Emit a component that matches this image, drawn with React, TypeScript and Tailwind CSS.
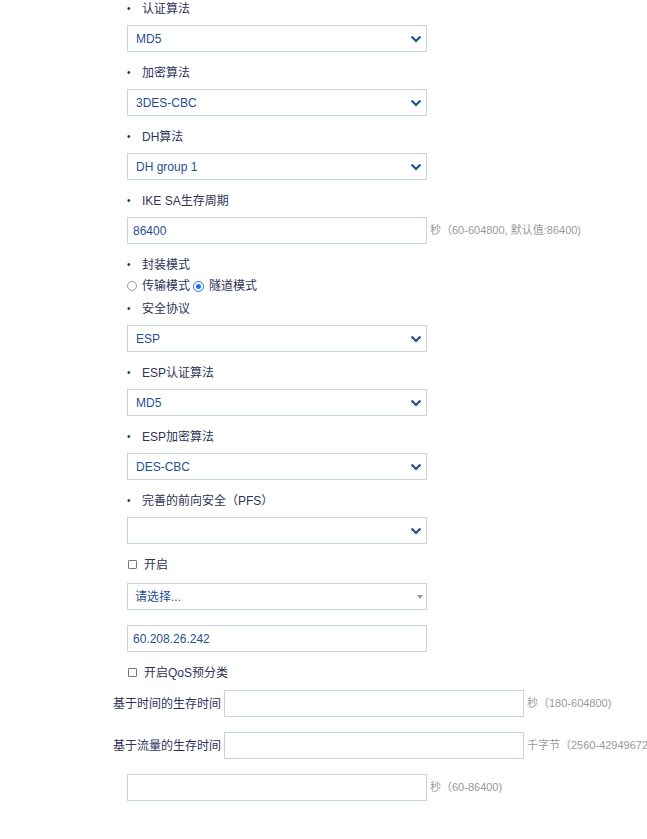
import React from "react";

const font = { fontFamily: '"Liberation Sans", "Noto Sans CJK SC", sans-serif' };

function Chevron() {
  return (
    <svg width="10" height="7" viewBox="0 0 10 7" className="absolute right-[5px] top-[10px]">
      <path d="M1.3 1.3 L5 5 L8.7 1.3" stroke="#1f4f93" strokeWidth="2.2" fill="none" strokeLinecap="square" />
    </svg>
  );
}

function Label({ children }: { children: React.ReactNode }) {
  return (
    <div className="flex items-center h-[17px] text-[12px] text-[#2e3358]">
      <span className="w-[15px] text-[10px]">•</span>
      <span>{children}</span>
    </div>
  );
}

function Select({ value }: { value: string }) {
  return (
    <div className="relative mt-2 h-[27px] w-[300px] border border-[#c9d3e3] bg-white flex items-center pl-[8px] text-[12px] text-[#1f4f93]">
      {value}
      <Chevron />
    </div>
  );
}

function Input({ value }: { value?: string }) {
  return (
    <div className="shrink-0 h-[27px] w-[300px] border border-[#c9d3e3] bg-white flex items-center pl-[5px] text-[12px] text-[#1f4f93]">
      {value}
    </div>
  );
}

function Suffix({ children }: { children: React.ReactNode }) {
  return <span className="shrink-0 ml-[3px] text-[11px] text-[#999999] whitespace-nowrap">{children}</span>;
}

export default function App() {
  return (
    <div className="w-[647px] h-[839px] bg-white overflow-hidden pl-[127px]" style={font}>
      <Label>认证算法</Label>
      <Select value="MD5" />
      <div className="mt-3" />
      <Label>加密算法</Label>
      <Select value="3DES-CBC" />
      <div className="mt-3" />
      <Label>DH算法</Label>
      <Select value="DH group 1" />
      <div className="mt-3" />
      <Label>IKE SA生存周期</Label>
      <div className="mt-2 flex items-center">
        <Input value="86400" />
        <Suffix>秒（60-604800, 默认值:86400)</Suffix>
      </div>
      <div className="mt-3" />
      <Label>封装模式</Label>
      <div className="mt-[4px] h-[18px] flex items-center text-[12px] text-[#2e3358]">
        <span className="inline-block w-[10px] h-[10px] rounded-full border border-[#999] bg-white mr-[5px]" />
        <span>传输模式</span>
        <span className="inline-flex items-center justify-center w-[11px] h-[11px] rounded-full border border-[#1a73e8] bg-white ml-[3px] mr-[5px]">
          <span className="w-[5px] h-[5px] rounded-full bg-[#1a73e8]" />
        </span>
        <span>隧道模式</span>
      </div>
      <div className="mt-[5px]" />
      <Label>安全协议</Label>
      <Select value="ESP" />
      <div className="mt-3" />
      <Label>ESP认证算法</Label>
      <Select value="MD5" />
      <div className="mt-3" />
      <Label>ESP加密算法</Label>
      <Select value="DES-CBC" />
      <div className="mt-3" />
      <Label>完善的前向安全（PFS）</Label>
      <Select value="" />
      <div className="mt-3 h-[17px] flex items-center text-[12px] text-[#2e3358]">
        <span className="inline-block w-[9px] h-[9px] border border-[#777] rounded-[1px] ml-[1px] mr-[7px]" />
        开启
      </div>
      <div className="relative mt-[10px] h-[27px] w-[300px] border border-[#c9d3e3] bg-white flex items-center pl-[7px] text-[12px] text-[#1f4f93]">
        请选择...
        <span className="absolute right-[3px] top-[11px] w-0 h-0 border-l-[3px] border-r-[3px] border-t-[4px] border-l-transparent border-r-transparent border-t-[#999]" />
      </div>
      <div className="mt-[15px]">
        <Input value="60.208.26.242" />
      </div>
      <div className="mt-3 h-[17px] flex items-center text-[12px] text-[#2e3358]">
        <span className="inline-block w-[9px] h-[9px] border border-[#777] rounded-[1px] ml-[1px] mr-[7px]" />
        开启QoS预分类
      </div>
      <div className="-ml-[14px] mt-[9px] flex items-center text-[12px] text-[#2e3358] w-[700px]">
        <span className="shrink-0 w-[111px] whitespace-nowrap">基于时间的生存时间</span>
        <Input />
        <Suffix>秒（180-604800)</Suffix>
      </div>
      <div className="-ml-[14px] mt-[15px] flex items-center text-[12px] text-[#2e3358] w-[700px]">
        <span className="shrink-0 w-[111px] whitespace-nowrap">基于流量的生存时间</span>
        <Input />
        <Suffix>千字节（2560-4294967295)</Suffix>
      </div>
      <div className="mt-[15px] flex items-center">
        <Input />
        <Suffix>秒（60-86400)</Suffix>
      </div>
    </div>
  );
}
